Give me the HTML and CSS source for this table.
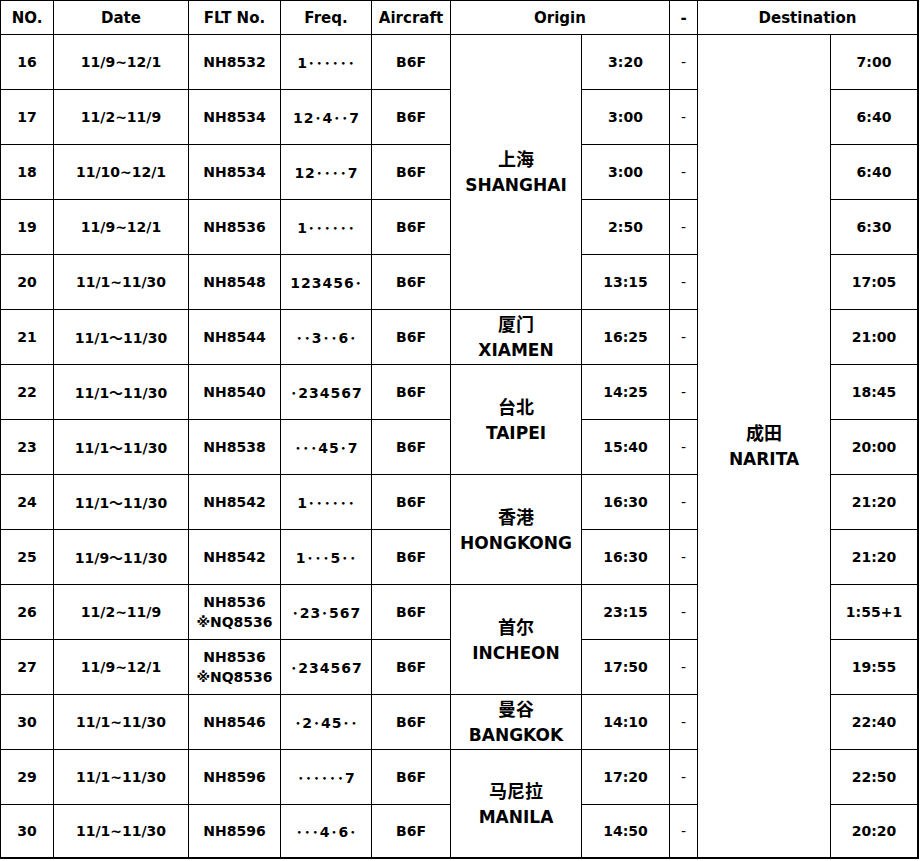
FILE: index.html
```html
<!DOCTYPE html>
<html lang="zh">
<head>
<meta charset="utf-8">
<title>Flight schedule</title>
<link rel="stylesheet" href="styles.css">
</head>
<body>
<div class="sched">
  <div class="c h">NO.</div>
  <div class="c h">Date</div>
  <div class="c h">FLT No.</div>
  <div class="c h">Freq.</div>
  <div class="c h">Aircraft</div>
  <div class="c h span2">Origin</div>
  <div class="c h dash">-</div>
  <div class="c h span2">Destination</div>

  <div class="c">16</div><div class="c">11/9~12/1</div><div class="c">NH8532</div><div class="c fq">1･･････</div><div class="c">B6F</div>
  <div class="c city r5"><span class="cn">上海</span><span class="en">SHANGHAI</span></div>
  <div class="c">3:20</div><div class="c dash">-</div>
  <div class="c city r15"><span class="cn">成田</span><span class="en">NARITA</span></div>
  <div class="c">7:00</div>

  <div class="c">17</div><div class="c">11/2~11/9</div><div class="c">NH8534</div><div class="c fq">12･4･･7</div><div class="c">B6F</div>
  <div class="c">3:00</div><div class="c dash">-</div><div class="c">6:40</div>

  <div class="c">18</div><div class="c">11/10~12/1</div><div class="c">NH8534</div><div class="c fq">12････7</div><div class="c">B6F</div>
  <div class="c">3:00</div><div class="c dash">-</div><div class="c">6:40</div>

  <div class="c">19</div><div class="c">11/9~12/1</div><div class="c">NH8536</div><div class="c fq">1･･････</div><div class="c">B6F</div>
  <div class="c">2:50</div><div class="c dash">-</div><div class="c">6:30</div>

  <div class="c">20</div><div class="c">11/1~11/30</div><div class="c">NH8548</div><div class="c fq">123456･</div><div class="c">B6F</div>
  <div class="c">13:15</div><div class="c dash">-</div><div class="c">17:05</div>

  <div class="c">21</div><div class="c">11/1～11/30</div><div class="c">NH8544</div><div class="c fq">･･3･･6･</div><div class="c">B6F</div>
  <div class="c city"><span class="cn">厦门</span><span class="en">XIAMEN</span></div>
  <div class="c">16:25</div><div class="c dash">-</div><div class="c">21:00</div>

  <div class="c">22</div><div class="c">11/1～11/30</div><div class="c">NH8540</div><div class="c fq">･234567</div><div class="c">B6F</div>
  <div class="c city r2"><span class="cn">台北</span><span class="en">TAIPEI</span></div>
  <div class="c">14:25</div><div class="c dash">-</div><div class="c">18:45</div>

  <div class="c">23</div><div class="c">11/1～11/30</div><div class="c">NH8538</div><div class="c fq">･･･45･7</div><div class="c">B6F</div>
  <div class="c">15:40</div><div class="c dash">-</div><div class="c">20:00</div>

  <div class="c">24</div><div class="c">11/1～11/30</div><div class="c">NH8542</div><div class="c fq">1･･････</div><div class="c">B6F</div>
  <div class="c city r2"><span class="cn">香港</span><span class="en">HONGKONG</span></div>
  <div class="c">16:30</div><div class="c dash">-</div><div class="c">21:20</div>

  <div class="c">25</div><div class="c">11/9～11/30</div><div class="c">NH8542</div><div class="c fq">1･･･5･･</div><div class="c">B6F</div>
  <div class="c">16:30</div><div class="c dash">-</div><div class="c">21:20</div>

  <div class="c">26</div><div class="c">11/2~11/9</div><div class="c flt2"><span>NH8536</span><span>※NQ8536</span></div><div class="c fq">･23･567</div><div class="c">B6F</div>
  <div class="c city r2"><span class="cn">首尔</span><span class="en">INCHEON</span></div>
  <div class="c">23:15</div><div class="c dash">-</div><div class="c">1:55+1</div>

  <div class="c">27</div><div class="c">11/9~12/1</div><div class="c flt2"><span>NH8536</span><span>※NQ8536</span></div><div class="c fq">･234567</div><div class="c">B6F</div>
  <div class="c">17:50</div><div class="c dash">-</div><div class="c">19:55</div>

  <div class="c">30</div><div class="c">11/1~11/30</div><div class="c">NH8546</div><div class="c fq">･2･45･･</div><div class="c">B6F</div>
  <div class="c city"><span class="cn">曼谷</span><span class="en">BANGKOK</span></div>
  <div class="c">14:10</div><div class="c dash">-</div><div class="c">22:40</div>

  <div class="c">29</div><div class="c">11/1~11/30</div><div class="c">NH8596</div><div class="c fq">･･････7</div><div class="c">B6F</div>
  <div class="c city r2"><span class="cn">马尼拉</span><span class="en">MANILA</span></div>
  <div class="c">17:20</div><div class="c dash">-</div><div class="c">22:50</div>

  <div class="c">30</div><div class="c">11/1~11/30</div><div class="c">NH8596</div><div class="c fq">･･･4･6･</div><div class="c">B6F</div>
  <div class="c">14:50</div><div class="c dash">-</div><div class="c">20:20</div>
</div>
</body>
</html>
```
FILE: styles.css
```css
html, body {
  margin: 0;
  padding: 0;
  background: #fff;
}

.sched {
  display: grid;
  grid-template-columns: 52px 134px 91px 90px 78px 130px 87px 27px 132px 86px;
  grid-template-rows: 33px repeat(14, 54px) 52px;
  gap: 1px;
  padding: 1px 2px 2px 1px;
  background: #000;
  width: max-content;
  font-family: "DejaVu Sans", "Noto Sans CJK SC", sans-serif;
  font-weight: bold;
  font-size: 14px;
  color: #000;
}

.c {
  background: #fff;
  display: flex;
  flex-direction: column;
  align-items: center;
  justify-content: center;
  text-align: center;
  white-space: nowrap;
}

.h {
  font-size: 15px;
}

.span2 {
  grid-column: span 2;
}

.r2 { grid-row: span 2; }
.r5 { grid-row: span 5; }
.r15 { grid-row: span 15; }

.dash {
  font-weight: normal;
}

.h.dash {
  font-weight: bold;
}

.fq {
  letter-spacing: 1px;
  padding-left: 1px;
}

.flt2 {
  line-height: 20px;
}

.city {
  line-height: 27px;
}

.city .cn {
  font-family: "Noto Sans CJK SC", sans-serif;
  font-size: 18px;
  font-weight: bold;
}

.city .en {
  font-size: 17px;
}
```
